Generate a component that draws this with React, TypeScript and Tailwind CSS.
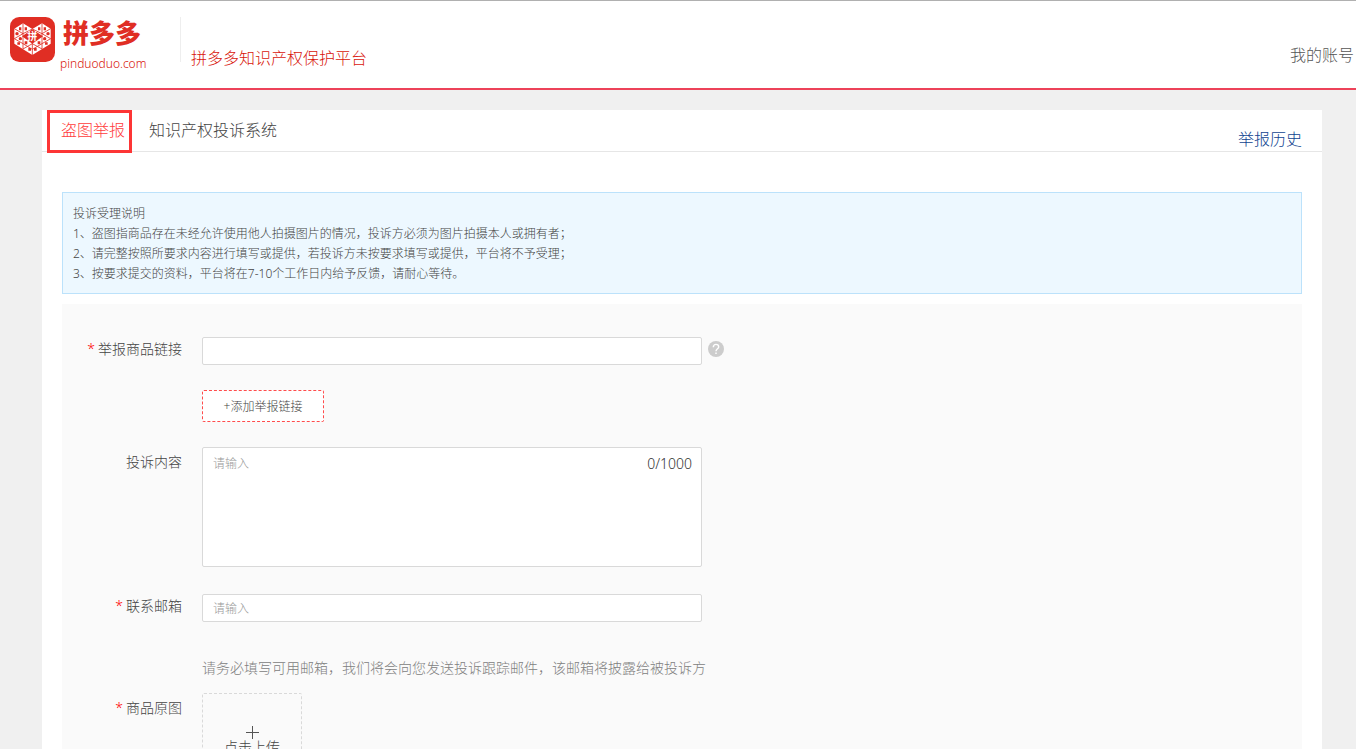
import { useState } from 'react';
import type { ReactNode } from 'react';

const notices = [
  '投诉受理说明',
  '1、盗图指商品存在未经允许使用他人拍摄图片的情况，投诉方必须为图片拍摄本人或拥有者；',
  '2、请完整按照所要求内容进行填写或提供，若投诉方未按要求填写或提供，平台将不予受理；',
  '3、按要求提交的资料，平台将在7-10个工作日内给予反馈，请耐心等待。',
];

const MAX_LENGTH = 1000;

function LogoMark() {
  return (
    <svg viewBox="0 0 135 135" className="w-[45px] h-[45px] shrink-0" aria-hidden="true">
      <rect width="135" height="135" rx="28" fill="#e02e24" />
      <path d="M13 35 39 19 67 36 96 19 122 35V80L67 114 13 80Z" fill="#fff" />
      <path
        d="M39 19V96M96 19V96M67 78V114M13 35 39 50 13 65 39 80 67 97 96 80 122 65 96 50 122 35M39 50 67 36 96 50M39 96 67 80 96 96"
        fill="none"
        stroke="#e02e24"
        strokeWidth="2.5"
      />
      {/* Center diamond */}
      <path d="M67 37 99 58 67 80 36 58Z" fill="#e02e24" />
      <g fill="#e02e24">
        <path d="M27 31h7v9h-7zM44 31h7v9h-7zM84 31h7v9h-7zM101 31h7v9h-7z" />
        <circle cx="21" cy="50" r="5" />
        <circle cx="114" cy="50" r="5" />
        <circle cx="31" cy="65" r="5" />
        <circle cx="104" cy="65" r="5" />
        <path d="M22 76h8v7h-8zM105 76h8v7h-8zM44 73h8v9h-8zM83 73h8v9h-8zM55 93h8v8h-8zM72 93h8v8h-8z" />
      </g>
      <text x="67" y="69" textAnchor="middle" fontSize="30" fill="#fff" className="font-bold">
        拼
      </text>
    </svg>
  );
}

function Header() {
  return (
    <header className="flex h-[90px] border-t border-b-2 border-t-[#b0b0b0] border-b-[#ed4259] bg-white pl-[10px] pr-[2px] pt-4">
      <a href="#home" className="flex w-[170px] gap-[5px] text-[#e02e24]">
        <LogoMark />
        <span className="flex flex-col">
          <span className="pl-[3px] text-[26px] leading-8 font-black">拼多多</span>
          <span className="text-xs leading-[30px] text-[#d8150a]">pinduoduo.com</span>
        </span>
      </a>
      <div className="h-[45px] w-px bg-[#eeeeee]" />
      <h1 className="pl-[10px] pt-[29px] text-base leading-6 text-[#d8150a]">拼多多知识产权保护平台</h1>
      <a href="#account" className="ml-auto pt-[26px] text-base leading-6 text-[#555]">
        我的账号
      </a>
    </header>
  );
}

function Tabs() {
  return (
    <nav className="flex h-[42px] items-start border-b border-[#e6e6e6] pl-[5px] pr-5 text-base">
      <a href="#report" className="h-[43px] border-3 border-[#fd3535] pl-[11px] pr-1 leading-[35px] text-[#ff3c3c]">
        盗图举报
      </a>
      <a href="#complaint" className="ml-[17px] leading-[41px] text-[#444]">
        知识产权投诉系统
      </a>
      <a href="#history" className="ml-auto self-end leading-6 text-[#104390]">
        举报历史
      </a>
    </nav>
  );
}

interface RowLabelProps {
  htmlFor: string;
  required?: boolean;
  tall?: boolean;
  children: ReactNode;
}

function RowLabel({ htmlFor, required, tall, children }: RowLabelProps) {
  return (
    <label htmlFor={htmlFor} className={`w-[120px] shrink-0 text-right ${tall ? 'leading-[30px]' : 'leading-6'}`}>
      {required && <span className="mr-[3px] text-[#f00]">*</span>}
      {children}
    </label>
  );
}

function ReportForm() {
  const [content, setContent] = useState('');

  return (
    <form className="mt-[10px] bg-[#fafafa] pt-[33px] pb-10 text-sm text-[#444]">
      <div className="flex gap-5">
        <RowLabel htmlFor="link" required>
          举报商品链接
        </RowLabel>
        <div className="flex w-full max-w-[522px] items-start gap-[6px]">
          <input
            id="link"
            type="text"
            className="h-7 w-full max-w-[500px] rounded-xs border border-[#d9d9d9] bg-white px-[10px] text-xs outline-none"
          />
          <button
            type="button"
            aria-label="帮助"
            className="mt-1 h-4 w-4 shrink-0 rounded-full bg-[#cccccc] text-white"
          >
            <svg viewBox="0 0 16 16" className="h-4 w-4" fill="none" stroke="currentColor" strokeWidth="1.4">
              <path d="M5.3 6.2C5.3 4.4 6.4 3.4 8 3.4S10.7 4.4 10.7 5.9C10.7 7.7 8 7.8 8 10.2M8 11.4V13" />
            </svg>
          </button>
        </div>
      </div>

      <div className="mt-[25px] ml-[140px]">
        <button
          type="button"
          className="h-8 w-[122px] rounded-xs border border-dashed border-[#ff4c4c] bg-white pt-[2px] text-xs"
        >
          +添加举报链接
        </button>
      </div>

      <div className="mt-[25px] flex gap-5">
        <RowLabel htmlFor="content" tall>
          投诉内容
        </RowLabel>
        <div className="relative w-full max-w-[500px]">
          <textarea
            id="content"
            placeholder="请输入"
            maxLength={MAX_LENGTH}
            value={content}
            onChange={(e) => setContent(e.target.value)}
            className="block h-[120px] w-full resize-none rounded-xs border border-[#d9d9d9] bg-white px-[10px] py-[6px] text-xs leading-5 outline-none placeholder:text-[#999]"
          />
          <span className="absolute top-[5px] right-[10px] leading-6 text-[#333]">
            {content.length}/{MAX_LENGTH}
          </span>
        </div>
      </div>

      <div className="mt-[27px] flex gap-5">
        <RowLabel htmlFor="email" required>
          联系邮箱
        </RowLabel>
        <input
          id="email"
          type="email"
          placeholder="请输入"
          className="h-7 w-full max-w-[500px] rounded-xs border border-[#d9d9d9] bg-white px-[10px] text-xs outline-none placeholder:text-[#999]"
        />
      </div>
      <p className="mt-[34px] ml-[140px] leading-6 text-[#808080]">
        请务必填写可用邮箱，我们将会向您发送投诉跟踪邮件，该邮箱将披露给被投诉方
      </p>

      <div className="mt-[13px] flex gap-5">
        <RowLabel htmlFor="picture" required tall>
          商品原图
        </RowLabel>
        <label className="relative flex h-[100px] w-[100px] cursor-pointer flex-col items-center rounded-xs border border-dashed border-[#d9d9d9] pt-8">
          <input id="picture" type="file" className="sr-only" />
          <svg viewBox="0 0 13 13" className="h-[13px] w-[13px]" stroke="#555" aria-hidden="true">
            <path d="M0 6.5H13M6.5 0V13" />
          </svg>
          <span className="leading-4">点击上传</span>
        </label>
      </div>
    </form>
  );
}

export default function App() {
  return (
    <div className="h-screen overflow-y-auto bg-[#f0f0f0] font-['Noto_Sans','Noto_Sans_CJK_SC',sans-serif] font-light [scrollbar-width:none]">
      <Header />
      <main className="mt-5 mr-[34px] ml-[42px] bg-white pb-10">
        <Tabs />
        <div className="mt-10 px-5">
          <section className="border border-[#bce2fb] bg-[#edf8ff] px-[10px] pt-[11px] pb-[9px] text-xs leading-5 text-[#444]">
            {notices.map((line) => (
              <p key={line}>{line}</p>
            ))}
          </section>
          <ReportForm />
        </div>
      </main>
    </div>
  );
}
